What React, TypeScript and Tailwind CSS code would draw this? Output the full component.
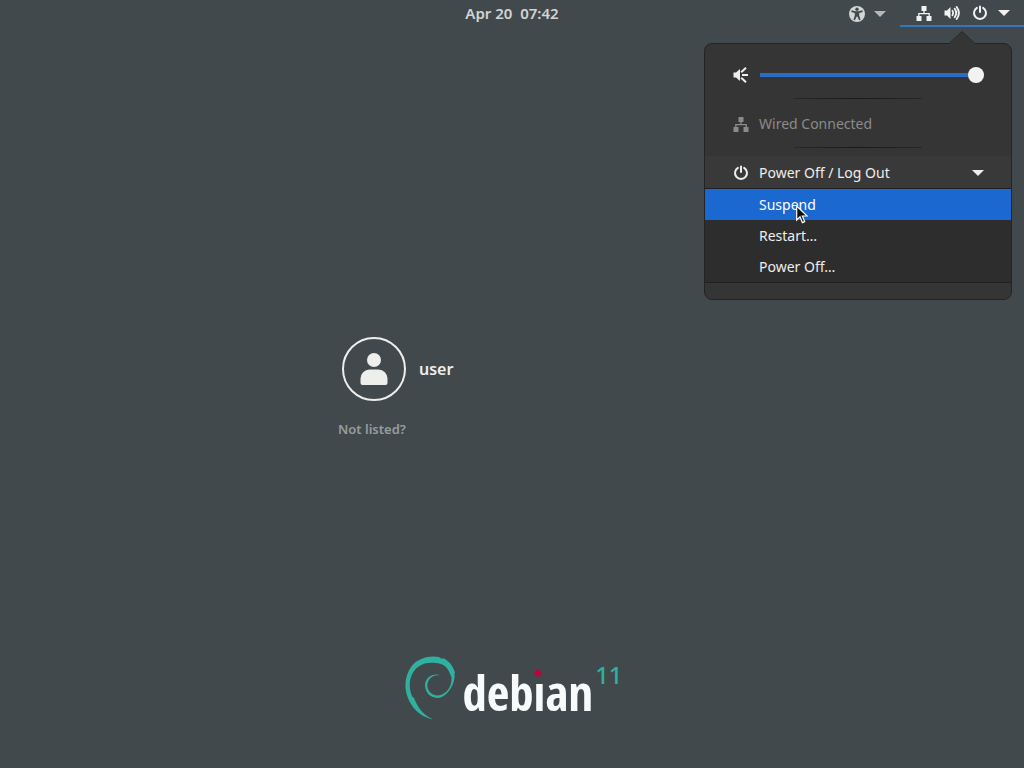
import { useState } from "react";

type IconProps = { className?: string };

function NetworkIcon({ className = "" }: IconProps) {
  return (
    <svg viewBox="0 0 16 16" className={`size-4 shrink-0 ${className}`} fill="currentColor" aria-hidden="true">
      <path d="M5.500 1h5v5h-5zM0.500 11h5v5h-5zM10.500 11h5v5h-5z" />
      <path d="M8 5.500v3M2.800 11.500V8.600h10.400v2.900" fill="none" stroke="currentColor" strokeWidth="1.300" />
    </svg>
  );
}

function PowerIcon({ className = "" }: IconProps) {
  return (
    <svg viewBox="0 0 16 16" className={`size-4 shrink-0 ${className}`} fill="none" stroke="currentColor" strokeWidth="2" strokeLinecap="round" aria-hidden="true">
      <path d="M8 1.500v5.500M4.900 2.900a6 6 0 1 0 6.200 0" />
    </svg>
  );
}

function VolumeIcon() {
  return (
    <svg viewBox="0 0 16 16" className="size-4 shrink-0" aria-hidden="true">
      <path d="M0.500 5.500h2.500L6.500 2v12L3 10.500H0.500z" fill="currentColor" />
      <g fill="none" stroke="currentColor" strokeWidth="1.900" strokeLinecap="round">
        <path d="M8.500 5.800q1.500 2.200 0 4.400" />
        <path d="M10.700 3.800q3 4.200 0 8.400" />
        <path d="M12.700 2q4.400 6 0 12" />
      </g>
    </svg>
  );
}

function SpeakerIcon() {
  return (
    <svg viewBox="0 0 16 16" className="size-4 shrink-0" aria-hidden="true">
      <path d="M0.500 5.500h2.500L7 2v12L3 10.500H0.500z" fill="currentColor" />
      <path d="M9 8h6M8.200 5.200l4.800-4.500M8.200 10.800l4.800 4.500" fill="none" stroke="currentColor" strokeWidth="2" />
    </svg>
  );
}

function AccessibilityIcon() {
  return (
    <svg viewBox="0 0 16 16" className="size-4 shrink-0" aria-hidden="true">
      <circle cx="8" cy="8" r="8" fill="currentColor" />
      <g className="fill-[#42494c]">
        <circle cx="8" cy="3.200" r="1.700" />
        <path d="M2.600 4.300 6.500 5.300h3l3.900-1 .3 1.600-3.500 1.200v2.300l1.400 4.300-1.500.6L8.300 10.600h-.6L5.900 14.300l-1.500-.6 1.400-4.300V7.100L2.300 5.900z" />
      </g>
    </svg>
  );
}

function Caret({ className = "" }: IconProps) {
  return (
    <svg viewBox="0 0 12 6" className={`h-1.5 w-3 shrink-0 ${className}`} fill="currentColor" aria-hidden="true">
      <path d="M0 0h12L6 6z" />
    </svg>
  );
}

function Swirl() {
  return (
    <svg viewBox="0 0 150 192" className="h-16 w-[50px] text-[#2fb0a0]" fill="currentColor" aria-hidden="true">
      <path d="M80 190C44 181 19 155 8 124C-4 92 0 58 20 30C40 6 76-3 104 4l5 4 6-1C132 14 145 32 150 50l-2 3 1 8C147 86 134 110 112 122C88 133 63 118 60 91C59 69 76 53 102 56l-1 2C80 56 67 72 67 90C69 110 87 122 107 117C129 110 142 88 139 62L135 53C128 34 114 22 92 21C64 17 38 27 25 48C10 73 12 100 22 122l5 4C37 152 54 177 82 189z" />
    </svg>
  );
}

function Divider() {
  return <div className="mx-auto h-px w-32 bg-gradient-to-r from-[#272727] via-[#191919] to-[#272727]" />;
}

const actions = ["Suspend", "Restart…", "Power Off…"];

function SystemMenu() {
  const [volume, setVolume] = useState(100);
  return (
    <div className="absolute top-[43px] right-3 w-[308px] rounded-lg border border-[#222525] bg-[#353535] pb-4 text-[14px] leading-5 text-[#eeeeec]">
      <svg viewBox="0 0 26 13" className="absolute -top-[13px] right-9 h-[13px] w-[26px]" aria-hidden="true">
        <path d="M0 13 13 0l13 13z" className="fill-[#353535]" />
        <path d="M0 12.500 13 0.500l13 12" fill="none" className="stroke-[#292c2c]" />
      </svg>
      <div className="flex h-[54px] items-center gap-[11px] pt-2 pr-[27px] pl-7">
        <SpeakerIcon />
        <input
          type="range"
          aria-label="Volume"
          value={volume}
          onChange={(e) => setVolume(Number(e.target.value))}
          style={{ backgroundSize: `${volume}% 4px` }}
          className="h-4 min-w-0 flex-1 appearance-none bg-[linear-gradient(#2b6bc6,#2b6bc6)] bg-left bg-no-repeat outline-none [&::-webkit-slider-thumb]:size-4 [&::-webkit-slider-thumb]:appearance-none [&::-webkit-slider-thumb]:rounded-full [&::-webkit-slider-thumb]:bg-[#f2f2f1]"
        />
      </div>
      <Divider />
      <button type="button" disabled className="flex h-12 w-full items-center gap-2.5 pt-px pr-[27px] pl-7 text-left text-[#8b8b8a]">
        <NetworkIcon />
        Wired Connected
      </button>
      <Divider />
      <div className="h-2" />
      <button type="button" aria-expanded="true" className="flex h-8 w-full items-center gap-2.5 bg-[#393939] pt-px pr-[27px] pl-7 text-left">
        <PowerIcon />
        <span className="flex-1">Power Off / Log Out</span>
        <Caret />
      </button>
      <div className="border-y border-[#202020] bg-[#2d2d2d]">
        {actions.map((label, i) => (
          <button
            key={label}
            type="button"
            className={`block h-[31px] w-full pl-[54px] text-left ${i === 0 ? "bg-[#1b68d0] text-white" : ""}`}
          >
            {label}
          </button>
        ))}
      </div>
    </div>
  );
}

function Pointer() {
  return (
    <svg viewBox="0 0 12 19" className="pointer-events-none absolute top-[205px] right-4 mr-[200px] h-[19px] w-3" aria-hidden="true">
      <path d="M.7 1v14l3.300-3.200 2.400 5.800 2.300-1-2.400-5.600h4.800z" fill="#111" stroke="#fff" strokeWidth="1.200" />
    </svg>
  );
}

export default function App() {
  return (
    <div className="relative flex min-h-screen flex-col bg-[#42494c] font-['Noto_Sans','Open_Sans',sans-serif]">
      <header className="grid h-[27px] grid-cols-[1fr_auto_1fr] items-stretch text-[#d3d5d5]">
        <div />
        <button type="button" className="text-[15px] font-semibold whitespace-pre">
          {"Apr 20  07:42"}
        </button>
        <div className="flex justify-end gap-3.5">
          <button type="button" aria-label="Accessibility" className="flex items-center gap-[9px]">
            <AccessibilityIcon />
            <Caret className="opacity-80" />
          </button>
          <button type="button" aria-label="System" className="flex items-center gap-3 border-b-2 border-[#3574c0] pr-3.5 pl-4 text-[#f2f2f1]">
            <NetworkIcon />
            <VolumeIcon />
            <PowerIcon />
            <Caret className="-ml-0.5" />
          </button>
        </div>
      </header>

      <div className="grow-[10]" />
      <main className="mx-auto w-[348px]">
        <button type="button" className="flex items-center gap-[13px] pl-1 text-[16px] font-semibold text-[#eeeeec]">
          <svg viewBox="0 0 64 64" className="size-16" aria-hidden="true">
            <circle cx="32" cy="32" r="31" fill="none" stroke="currentColor" strokeWidth="2" />
            <circle cx="32" cy="23" r="7" fill="currentColor" />
            <path d="M18.500 46v-4.500a9 9 0 0 1 9-9h9a9 9 0 0 1 9 9V46a2 2 0 0 1-2 2h-23a2 2 0 0 1-2-2z" fill="currentColor" />
          </svg>
          user
        </button>
        <button type="button" className="mt-[18px] block text-[13px] leading-5 font-semibold text-[#989c9a]">
          Not listed?
        </button>
      </main>
      <div className="grow-[7]" />

      <footer className="flex justify-center pb-10 pl-1">
        <div className="pr-[7px]">
          <Swirl />
        </div>
        <span className="relative font-['Open_Sans_Condensed','Liberation_Sans_Narrow',sans-serif] text-[49px] leading-[72px] font-bold text-[#f8fbfb]">
          debian
          <span className="absolute top-2 left-[70px] flex h-[18px] w-3 items-center justify-center bg-[#42494c]">
            <span className="size-1.5 rotate-45 bg-[#c0003c]" />
          </span>
        </span>
        <span className="pt-1 pl-0.5 text-[24px] leading-[30px] font-medium text-[#2fb0a0]">11</span>
      </footer>

      <SystemMenu />
      <Pointer />
    </div>
  );
}
